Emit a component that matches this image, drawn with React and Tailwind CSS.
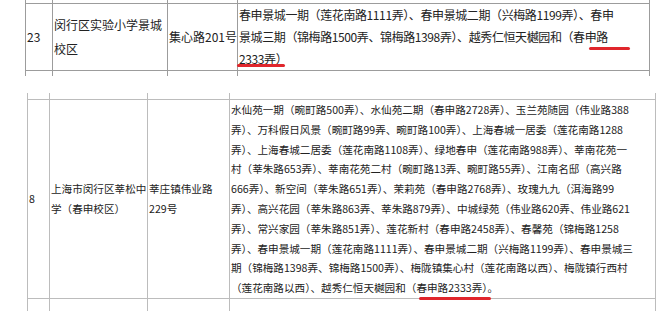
import React from "react";

const topLines = [
  "春申景城一期（莲花南路1111弄）、春申景城二期（兴梅路1199弄）、春申",
  "景城三期（锦梅路1500弄、锦梅路1398弄）、越秀仁恒天樾园和（春申路",
  "2333弄）",
];

const bottomLines = [
  "水仙苑一期（畹町路500弄）、水仙苑二期（春申路2728弄）、玉兰苑随园（伟业路388",
  "弄）、万科假日风景（畹町路99弄、畹町路100弄）、上海春城一居委（莲花南路1288",
  "弄）、上海春城二居委（莲花南路1108弄）、绿地春申（莲花南路988弄）、莘南花苑一",
  "村（莘朱路653弄）、莘南花苑二村（畹町路13弄、畹町路55弄）、江南名邸（高兴路",
  "666弄）、新空间（莘朱路651弄）、茉莉苑（春申路2768弄）、玫瑰九九（洱海路99",
  "弄）、高兴花园（莘朱路863弄、莘朱路879弄）、中城绿苑（伟业路620弄、伟业路621",
  "弄）、常兴家园（莘朱路851弄）、莲花新村（春申路2458弄）、春馨苑（锦梅路1258",
  "弄）、春申景城一期（莲花南路1111弄）、春申景城二期（兴梅路1199弄）、春申景城三",
  "期（锦梅路1398弄、锦梅路1500弄）、梅陇镇集心村（莲花南路以西）、梅陇镇行西村",
  "（莲花南路以西）、越秀仁恒天樾园和（春申路2333弄）。",
];

// hand drawn red marker line
const Mark = ({ className }) => (
  <div className={`absolute h-[3px] rounded-full bg-[#e0262c] ${className}`} />
);

const TopTable = () => (
  <div className="ml-[25px] w-[625px] text-[12px] text-[#222]">
    {/* tail of previous row */}
    <div className="grid h-[3px] grid-cols-[27px_115px_70px_413px]">
      <div className="border-l border-[#9c9c9c]" />
      <div className="border-l border-[#9c9c9c]" />
      <div className="border-l border-[#9c9c9c]" />
      <div className="border-x border-[#9c9c9c]" />
    </div>
    <div className="grid h-[68px] grid-cols-[27px_115px_70px_413px] border-y border-[#9c9c9c]">
      <div className="flex items-center border-l border-[#9c9c9c] pl-[1px]">23</div>
      <div className="flex flex-col justify-center border-l border-[#9c9c9c] pl-[1px] leading-[24px]">
        <div>闵行区实验小学景城</div>
        <div>校区</div>
      </div>
      <div className="flex items-center whitespace-nowrap border-l border-[#9c9c9c] pl-[1px]">
        集心路201号
      </div>
      <div className="flex flex-col justify-center border-x border-[#9c9c9c] pl-[1px] leading-[22px] tracking-[-0.4px]">
        {topLines.map((l) => (
          <div key={l} className="whitespace-nowrap">
            {l}
          </div>
        ))}
      </div>
    </div>
    {/* start of next row */}
    <div className="grid h-[5px] grid-cols-[27px_115px_70px_413px]">
      <div className="border-l border-[#9c9c9c]" />
      <div className="border-l border-[#9c9c9c]" />
      <div className="border-l border-[#9c9c9c]" />
      <div className="border-x border-[#9c9c9c]" />
    </div>
  </div>
);

const BottomTable = () => (
  <div className="ml-[27px] w-[629px] text-[10.6px] text-[#222]">
    <div className="grid h-[6px] grid-cols-[22px_98px_82px_427px]">
      <div className="border-l border-[#bcbcbc]" />
      <div className="border-l border-[#bcbcbc]" />
      <div className="border-l border-[#bcbcbc]" />
      <div className="border-x border-[#bcbcbc]" />
    </div>
    <div className="grid h-[200px] grid-cols-[22px_98px_82px_427px] border-y border-[#bcbcbc]">
      <div className="flex items-center border-l border-[#bcbcbc] pl-[1px]">8</div>
      <div className="flex flex-col justify-center whitespace-nowrap border-l border-[#bcbcbc] pl-[1px] leading-[20px]">
        <div>上海市闵行区莘松中</div>
        <div>学（春申校区）</div>
      </div>
      <div className="flex flex-col justify-center whitespace-nowrap border-l border-[#bcbcbc] pl-[1px] leading-[20px]">
        <div>莘庄镇伟业路</div>
        <div>229号</div>
      </div>
      <div className="flex flex-col justify-center border-x border-[#bcbcbc] pl-[1px] leading-[19.8px]">
        {bottomLines.map((l) => (
          <div key={l} className="whitespace-nowrap">
            {l}
          </div>
        ))}
      </div>
    </div>
    <div className="grid h-[12px] grid-cols-[22px_98px_82px_427px]">
      <div className="border-l border-[#bcbcbc]" />
      <div className="border-l border-[#bcbcbc]" />
      <div className="border-l border-[#bcbcbc]" />
      <div className="border-x border-[#bcbcbc]" />
    </div>
  </div>
);

export default function App() {
  return (
    <div className="relative h-[311px] w-[660px] overflow-hidden bg-white font-['Noto_Sans_CJK_SC',sans-serif]">
      <TopTable />
      <div className="h-[17px]" />
      <BottomTable />
      <Mark className="left-[237px] top-[64px] w-[48px]" />
      <Mark className="left-[589px] top-[47px] w-[41px]" />
      <Mark className="left-[419px] top-[297px] w-[72px]" />
    </div>
  );
}
